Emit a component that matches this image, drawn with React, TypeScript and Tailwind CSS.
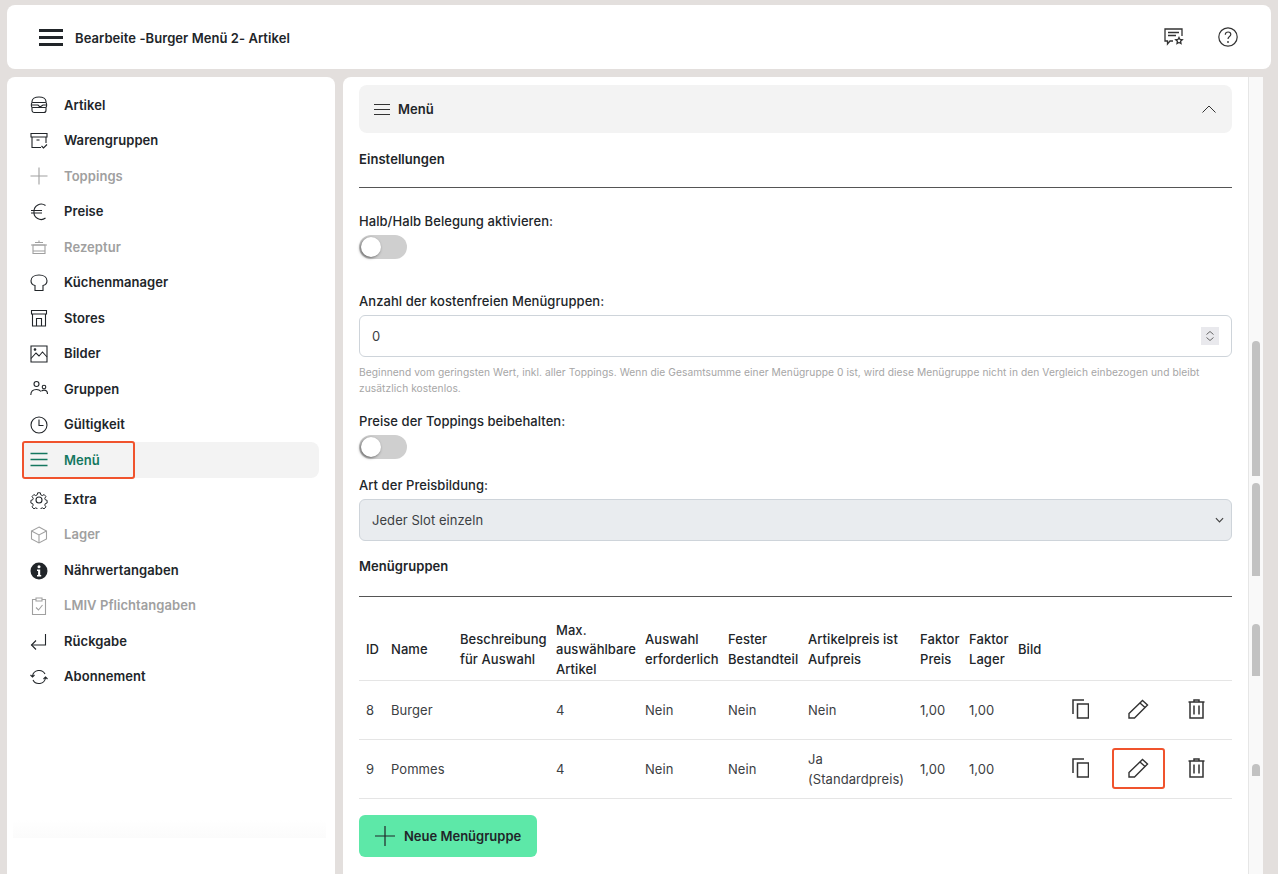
import React from "react";

type IconProps = { className?: string };

const Line = ({ className, children }: IconProps & { children: React.ReactNode }) => (
  <svg viewBox="0 0 18 18" fill="none" stroke="currentColor" strokeWidth="1.1" className={className ?? "size-[18px]"}>
    {children}
  </svg>
);

const BurgerIcon = () => (
  <Line>
    <path d="M2 6.500V5.500C2 2.800 5 1 9 1s7 1.800 7 4.500v1" />
    <path d="M2.800 6.500h12.400a1.400 1.400 0 0 1 1.400 1.400v2.200a1.400 1.400 0 0 1-1.400 1.400H2.800a1.400 1.400 0 0 1-1.400-1.400V7.900a1.400 1.400 0 0 1 1.400-1.400Z" />
    <path d="M2 9h6l2 2 3-2h3" />
    <path d="M2 11.500v2.700A2.300 2.300 0 0 0 4.300 16.500h9.400a2.300 2.300 0 0 0 2.300-2.300v-2.700" />
  </Line>
);
const BoxCheckIcon = () => (
  <Line>
    <path d="M1 1.500h16v3.500H1z" />
    <path d="M2 5v10.500h9M16 5v6" />
    <path d="M6.500 8h3" />
    <path d="M11.500 14l2 2 3.500-3.500" />
  </Line>
);
const PlusIcon = () => (
  <Line>
    <path d="M9 .5v17M.5 9h17" />
  </Line>
);
const EuroIcon = () => (
  <Line>
    <path d="M15.500 2.500A7.200 7.200 0 0 0 4 8.500a7.200 7.200 0 0 0 11.500 6.500" />
    <path d="M1 7.500h11M1 10h11" />
  </Line>
);
const PotIcon = () => (
  <Line>
    <path d="M3 7h12v8.500H3z" />
    <path d="M1 7h16M5 4.500h8M9 2.500v2M3 13h12" />
  </Line>
);
const ChefIcon = () => (
  <Line>
    <path d="M5 16.500V11.500C2.500 11 1 9 1 6.800 1 3.500 4 1 9 1s8 2.500 8 5.800c0 2.200-1.500 4.200-4 4.700v5z" />
  </Line>
);
const StoreIcon = () => (
  <Line>
    <path d="M1.500 1.500h15v3.500h-15z" />
    <path d="M2.500 5v12h13V5" />
    <path d="M6.500 17v-7.500h5V17" />
  </Line>
);
const ImageIcon = () => (
  <Line>
    <path d="M1 1h16v16H1z" />
    <path d="M1 13.500l5-5.500 3 3 3.500-4 4.500 5" />
    <circle cx="5" cy="4.500" r=".8" fill="currentColor" />
  </Line>
);
const UsersIcon = () => (
  <Line>
    <circle cx="6.500" cy="4" r="2.500" />
    <circle cx="14" cy="7" r="1.800" />
    <path d="M.8 15c0-3.500 2.500-5.500 5.700-5.500 2 0 3.500.8 4.500 2M11.500 11c.8-.6 1.600-.9 2.500-.9 2.200 0 3.500 1.700 3.500 4" />
  </Line>
);
const ClockIcon = () => (
  <Line>
    <circle cx="9" cy="9" r="8" />
    <path d="M9 3.500V9.500h4.500" />
  </Line>
);
const MenuIcon = () => (
  <svg viewBox="0 0 18 18" fill="none" stroke="currentColor" strokeWidth="1.300" className="size-[18px]">
    <path d="M.5 2.500h17M.5 8.500h17M.5 14.500h17" />
  </svg>
);
const GearIcon = () => (
  <Line>
    <circle cx="9" cy="9" r="3" />
    <path d="M7.500 1h3l.5 2.300 1.700.8 2-1.200 2 2.300-1.300 1.900.6 1.700 2 .6v3l-2 .6-.6 1.700 1.300 1.900-2 2.300-2-1.200-1.700.8-.5 2.300h-3l-.5-2.300-1.700-.8-2 1.200-2-2.300 1.300-1.900-.6-1.700-2-.6v-3l2-.6.6-1.700L1.300 5.200l2-2.300 2 1.200 1.700-.8z" transform="translate(.9 .9) scale(.9)" />
  </Line>
);
const CubeIcon = () => (
  <Line>
    <path d="M9 1l7.500 4v8L9 17l-7.500-4V5z" />
    <path d="M1.500 5L9 9l7.500-4M9 9v8" />
  </Line>
);
const InfoIcon = () => (
  <svg viewBox="0 0 18 18" className="size-[18px]">
    <circle cx="9" cy="9" r="8.500" fill="currentColor" />
    <circle cx="9" cy="4.800" r="1.500" fill="#fff" />
    <path d="M7 7.500h3.200v5.500h1v1.500H7V13h1.100V9H7z" fill="#fff" />
  </svg>
);
const ClipboardIcon = () => (
  <Line>
    <path d="M6 2.500H2.500v15h13v-15H12" />
    <path d="M6 1h6v3H6z" />
    <path d="M6 10.500l2.500 2.500 4-5" />
  </Line>
);
const ReturnIcon = () => (
  <Line>
    <path d="M15.500 1v11H1.500" />
    <path d="M6 7.500L1.500 12 6 16.500" />
  </Line>
);
const SyncIcon = () => (
  <Line>
    <path d="M2.500 8A6.700 6.700 0 0 1 15 6" />
    <path d="M15.500 10A6.700 6.700 0 0 1 3 12" />
    <path d="M.5 7l2 2 2-2M17.500 11l-2-2-2 2" />
  </Line>
);
const ReviewIcon = () => (
  <svg viewBox="0 0 20 18" fill="none" stroke="currentColor" strokeWidth="1.300" className="w-[20px] h-[18px]">
    <path d="M9 13H6l-2.500 3v-3H1V1h17v7" />
    <path d="M4 4.500h11M4 7.500h8" />
    <path d="M15 9.500l1 2 2.300.3-1.700 1.500.4 2.300-2-1.100-2 1.100.4-2.300-1.700-1.500 2.300-.3z" />
  </svg>
);
const HelpIcon = () => (
  <svg viewBox="0 0 20 20" fill="none" stroke="currentColor" strokeWidth="1.200" className="size-[20px]">
    <circle cx="10" cy="10" r="9.200" />
    <path d="M7.300 7.800c0-1.800 1.200-2.800 2.800-2.800 1.600 0 2.700 1 2.700 2.400 0 2.200-2.800 2.200-2.800 4.600" />
    <circle cx="10" cy="15" r=".9" fill="currentColor" stroke="none" />
  </svg>
);
const CopyIcon = () => (
  <svg viewBox="0 0 17 20" fill="none" stroke="currentColor" strokeWidth="1.500" className="w-[17px] h-[20px]">
    <path d="M5.500 5h11v14h-11z" />
    <path d="M1 15V1h11" />
  </svg>
);
const PencilIcon = () => (
  <svg viewBox="0 0 21 20" fill="none" stroke="currentColor" strokeWidth="1.400" className="w-[21px] h-[20px]">
    <path d="M1 14.500L14.500 1.500l5 4.500L6.500 19H1z" />
    <path d="M12 4l5 4.500" />
  </svg>
);
const TrashIcon = () => (
  <svg viewBox="0 0 17 20" fill="none" stroke="currentColor" strokeWidth="1.500" className="w-[17px] h-[20px]">
    <path d="M.5 3h16M6 3V1h5v2" />
    <path d="M2 3v16h13V3" />
    <path d="M6 6.500v9M11 6.500v9" />
  </svg>
);

const navItems = [
  { label: "Artikel", icon: <BurgerIcon /> },
  { label: "Warengruppen", icon: <BoxCheckIcon /> },
  { label: "Toppings", icon: <PlusIcon />, disabled: true },
  { label: "Preise", icon: <EuroIcon /> },
  { label: "Rezeptur", icon: <PotIcon />, disabled: true },
  { label: "Küchenmanager", icon: <ChefIcon /> },
  { label: "Stores", icon: <StoreIcon /> },
  { label: "Bilder", icon: <ImageIcon /> },
  { label: "Gruppen", icon: <UsersIcon /> },
  { label: "Gültigkeit", icon: <ClockIcon /> },
  { label: "Menü", icon: <MenuIcon />, active: true },
  { label: "Extra", icon: <GearIcon /> },
  { label: "Lager", icon: <CubeIcon />, disabled: true },
  { label: "Nährwertangaben", icon: <InfoIcon /> },
  { label: "LMIV Pflichtangaben", icon: <ClipboardIcon />, disabled: true },
  { label: "Rückgabe", icon: <ReturnIcon /> },
  { label: "Abonnement", icon: <SyncIcon /> },
];

const rows = [
  { id: 8, name: "Burger", price: ["Nein"] },
  { id: 9, name: "Pommes", price: ["Ja", "(Standardpreis)"], marked: true },
];

const Toggle = () => (
  <div className="w-[48px] h-[24px] rounded-full bg-[#cfcfcf] flex items-center pl-[2px]">
    <div className="size-[20px] rounded-full bg-white shadow-[-1px_1px_3px_rgba(0,0,0,0.55)]" />
  </div>
);

const SectionTitle = ({ children }: { children: React.ReactNode }) => (
  <div className="font-semibold text-[13px] leading-[16px] text-[#212529]">{children}</div>
);

const Label = ({ children }: { children: React.ReactNode }) => (
  <div className="font-medium text-[13px] leading-[16px] text-[#212529]">{children}</div>
);

const Th = ({ children }: { children?: React.ReactNode }) => (
  <th className="px-[7px] text-left align-middle font-medium text-[13px] leading-[19.5px] text-[#212529]">{children}</th>
);

const Td = ({ children }: { children?: React.ReactNode }) => (
  <td className="px-[7px] pt-[2px] align-middle text-[13px] leading-[19.5px] text-[#3c4043]">{children}</td>
);

const App = () => {
  return (
    <div className="h-[874px] overflow-hidden bg-[#e3dfdd] flex flex-col pt-[5px] tracking-[0.06px] [font-family:Inter,sans-serif]">
      <header className="mx-[7px] h-[64px] shrink-0 rounded-[8px] bg-white flex items-center pl-[32px] pr-[33px]">
        <div className="w-[24px] flex flex-col gap-[4px] mr-[12px] mt-[1px]">
          <div className="h-[3px] bg-[#212529]" />
          <div className="h-[3px] bg-[#212529]" />
          <div className="h-[3px] bg-[#212529]" />
        </div>
        <div className="font-semibold text-[13px] text-[#212529] pt-[4px]">Bearbeite -Burger Menü 2- Artikel</div>
        <div className="ml-auto flex items-center gap-[34px] text-[#333]">
          <ReviewIcon />
          <HelpIcon />
        </div>
      </header>

      <div className="flex flex-1 min-h-0 mt-[8px] pl-[7px] pr-[15px] gap-[8px]">
        <aside className="w-[328px] shrink-0 rounded-t-[8px] bg-white pt-[10.5px] pl-[15px] pr-[16px] flex flex-col">
          {navItems.map((item) => (
            <div
              key={item.label}
              className={
                item.active
                  ? "relative h-[36px] -mt-[0.5px] mb-[3.95px] rounded-[8px] bg-[#f3f3f3] flex items-center pl-[8px] text-[#14775f]"
                  : item.disabled
                    ? "h-[35.5px] flex items-center pl-[8px] text-[#a0a0a0]"
                    : "h-[35.5px] flex items-center pl-[8px] text-[#212529]"
              }
            >
              <span className="w-[18px] flex justify-center mr-[16px]">{item.icon}</span>
              <span className={item.active ? "font-semibold text-[13px] pt-[1px]" : "font-semibold text-[13px]"}>{item.label}</span>
              {item.active && (
                <div className="absolute left-0 -top-[1px] -bottom-[1px] w-[113px] rounded-[3px] border-2 border-[#f0532d]" />
              )}
            </div>
          ))}
          <div className="mt-auto mb-[36px] -ml-[9px] -mr-[7px] h-[18px] bg-gradient-to-b from-white to-[#fbfbfb]" />
        </aside>

        <main className="flex-1 min-w-0 flex bg-white rounded-tl-[8px]">
          <div className="flex-1 min-w-0 pt-[8px] pl-[16px] pr-[16px]">
            <div className="h-[48px] rounded-[8px] bg-[#f3f3f3] flex items-center pl-[15px] pr-[16px] text-[#333]">
              <svg viewBox="0 0 16 11" fill="none" stroke="currentColor" strokeWidth="1" className="w-[16px] h-[11px] mr-[8px]">
                <path d="M0 .5h16M0 5.500h16M0 10.500h16" />
              </svg>
              <span className="font-semibold text-[13px] text-[#212529] pt-[1px]">Menü</span>
              <svg viewBox="0 0 14 8" fill="none" stroke="currentColor" strokeWidth="1" className="ml-auto w-[14px] h-[8px]">
                <path d="M.5 7.500L7 1l6.500 6.500" />
              </svg>
            </div>

            <div className="mt-[18px]">
              <SectionTitle>Einstellungen</SectionTitle>
              <div className="mt-[20px] border-t border-[#555]" />
            </div>

            <div className="mt-[25px]">
              <Label>Halb/Halb Belegung aktivieren:</Label>
              <div className="mt-[6px]">
                <Toggle />
              </div>
            </div>

            <div className="mt-[34px]">
              <Label>Anzahl der kostenfreien Menügruppen:</Label>
              <div className="mt-[6px] h-[42px] rounded-[6px] border border-[#ced4da] flex items-center pl-[12px] pr-[12px] text-[13px] text-[#3c4043]">
                <span className="pt-[1px]">0</span>
                <div className="ml-auto w-[18px] h-[18px] bg-[#e9e9ed] flex flex-col items-center justify-center gap-[2px] text-[#666]">
                  <svg viewBox="0 0 8 4" fill="none" stroke="currentColor" className="w-[8px] h-[4px]">
                    <path d="M.5 3.500L4 .5l3.500 3" />
                  </svg>
                  <svg viewBox="0 0 8 4" fill="none" stroke="currentColor" className="w-[8px] h-[4px]">
                    <path d="M.5 .5L4 3.500l3.500-3" />
                  </svg>
                </div>
              </div>
              <p className="mt-[7px] text-[10.22px] leading-[16px] text-[#a6a6a6]">
                Beginnend vom geringsten Wert, inkl. aller Toppings. Wenn die Gesamtsumme einer Menügruppe 0 ist, wird diese Menügruppe nicht in den Vergleich einbezogen und bleibt zusätzlich kostenlos.
              </p>
            </div>

            <div className="mt-[17px]">
              <Label>Preise der Toppings beibehalten:</Label>
              <div className="mt-[6px]">
                <Toggle />
              </div>
            </div>

            <div className="mt-[18px]">
              <Label>Art der Preisbildung:</Label>
              <div className="mt-[6px] h-[42px] rounded-[6px] border border-[#ced4da] bg-[#e9ecef] flex items-center pl-[12px] pr-[7px] text-[13px] text-[#3c4043]">
                <span className="pt-[1px]">Jeder Slot einzeln</span>
                <svg viewBox="0 0 10 6" fill="none" stroke="#444" strokeWidth="1.300" className="ml-auto w-[9px] h-[6px]">
                  <path d="M1 1l4 4 4-4" />
                </svg>
              </div>
            </div>

            <div className="mt-[17px]">
              <SectionTitle>Menügruppen</SectionTitle>
              <div className="mt-[22px] border-t border-[#555]" />
            </div>

            <table className="mt-[23px] w-full table-fixed border-collapse">
              <colgroup>
                <col className="w-[25px]" />
                <col className="w-[69px]" />
                <col className="w-[96px]" />
                <col className="w-[89px]" />
                <col className="w-[83px]" />
                <col className="w-[80px]" />
                <col className="w-[112px]" />
                <col className="w-[49px]" />
                <col className="w-[49px]" />
                <col className="w-[49px]" />
                <col />
              </colgroup>
              <thead>
                <tr className="h-[60px] border-b border-[#e5e5e5]">
                  <Th>ID</Th>
                  <Th>Name</Th>
                  <Th>Beschreibung für Auswahl</Th>
                  <Th>Max. auswählbare Artikel</Th>
                  <Th>Auswahl erforderlich</Th>
                  <Th>Fester Bestandteil</Th>
                  <Th>Artikelpreis ist Aufpreis</Th>
                  <Th>Faktor Preis</Th>
                  <Th>Faktor Lager</Th>
                  <Th>Bild</Th>
                  <Th />
                </tr>
              </thead>
              <tbody>
                {rows.map((row) => (
                  <tr key={row.id} className="h-[59px] border-b border-[#e5e5e5]">
                    <Td>{row.id}</Td>
                    <Td>{row.name}</Td>
                    <Td />
                    <Td>4</Td>
                    <Td>Nein</Td>
                    <Td>Nein</Td>
                    <Td>
                      {row.price.map((line) => (
                        <div key={line}>{line}</div>
                      ))}
                    </Td>
                    <Td>1,00</Td>
                    <Td>1,00</Td>
                    <Td />
                    <td className="pb-[2px] text-[#333]">
                      <div className="flex items-center pl-[12px]">
                        <CopyIcon />
                        <div className="relative ml-[39px] flex">
                          <PencilIcon />
                          {row.marked && (
                            <div className="absolute -left-[16px] -right-[16px] -top-[10px] -bottom-[11px] rounded-[3px] border-2 border-[#f0532d]" />
                          )}
                        </div>
                        <div className="ml-[39px] flex">
                          <TrashIcon />
                        </div>
                      </div>
                    </td>
                  </tr>
                ))}
              </tbody>
            </table>

            <button className="mt-[16px] h-[42px] w-[178px] rounded-[6px] bg-[#5de8a8] flex items-center pl-[16px] font-semibold text-[13px] tracking-normal text-[#212529]">
              <svg viewBox="0 0 20 20" fill="none" stroke="currentColor" strokeWidth="1.200" className="size-[20px] mr-[9px]">
                <path d="M10 0v20M0 10h20" />
              </svg>
              <span className="pt-[2px]">Neue Menügruppe</span>
            </button>
          </div>

          <div className="w-[15px] shrink-0 bg-[#f9f9f9] border-l border-[#e6e6e6] flex flex-col items-center pt-[264px] gap-[7px]">
            <div className="w-[8px] h-[135px] rounded-t-[4px] bg-[#c2c2c2]" />
            <div className="w-[8px] h-[93px] rounded-t-[4px] bg-[#c2c2c2]" />
            <div className="w-[8px] h-[52px] rounded-t-[4px] bg-[#c2c2c2] mt-[41px]" />
            <div className="w-[8px] h-[12px] rounded-t-[4px] bg-[#c2c2c2] mt-[81px]" />
          </div>
        </main>
      </div>
    </div>
  );
};

export default App;
